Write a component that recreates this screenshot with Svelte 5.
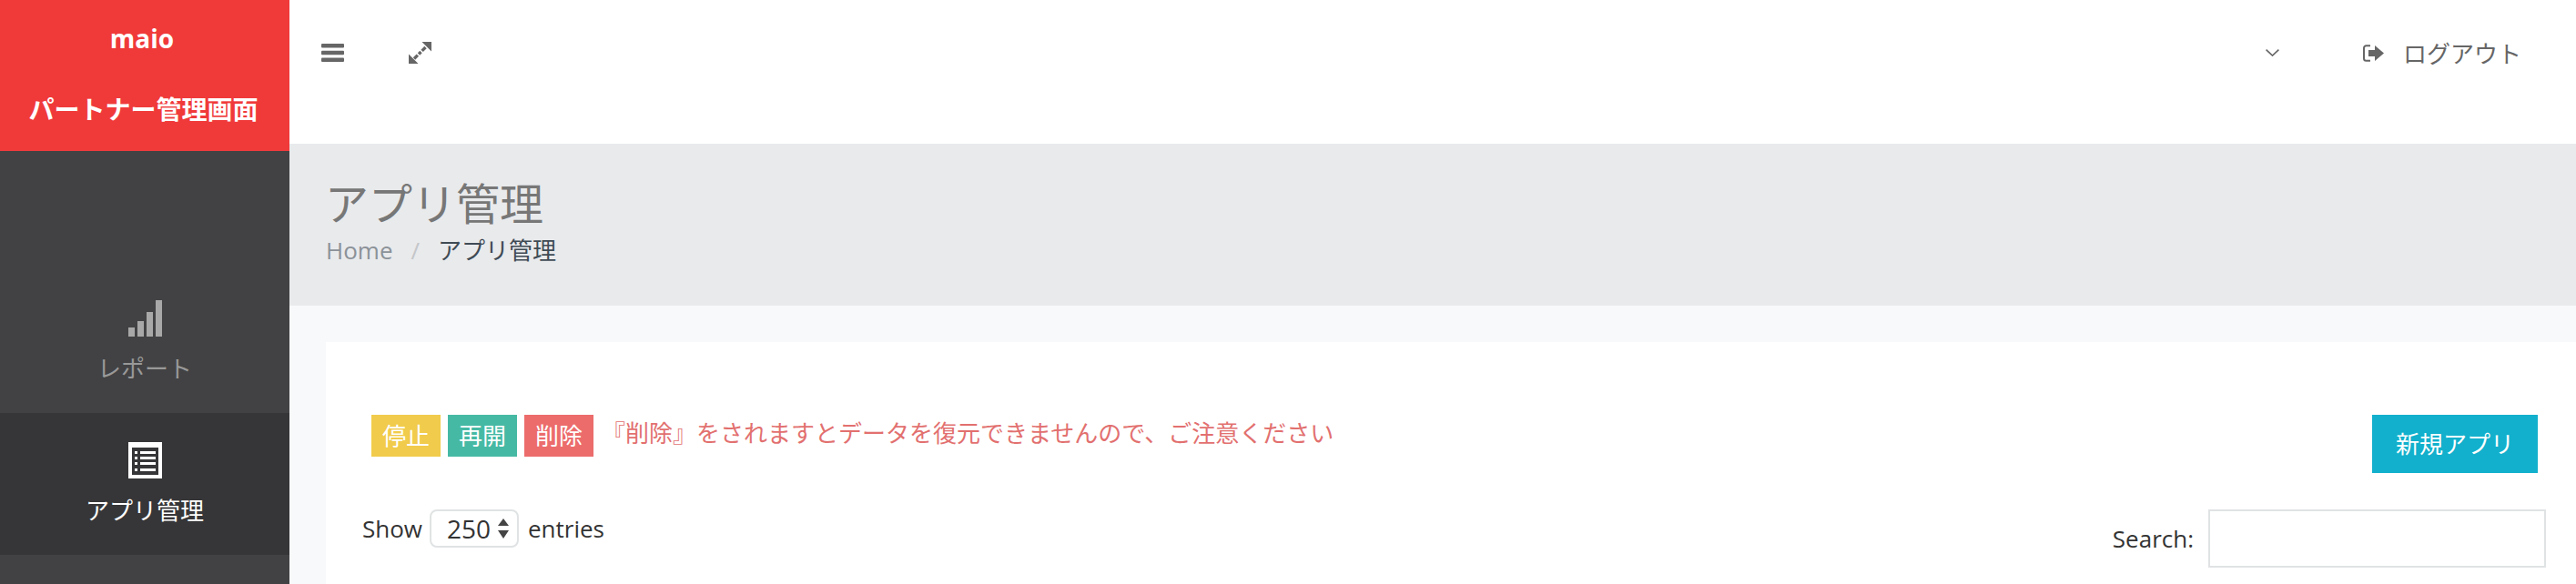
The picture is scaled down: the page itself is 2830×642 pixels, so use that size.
<script>
  const actions = [
    { label: '停止', cls: 'yellow' },
    { label: '再開', cls: 'green' },
    { label: '削除', cls: 'red' }
  ];
</script>

<div class="layout">
  <aside class="sidebar">
    <div class="logo">
      <div class="brand">maio</div>
      <div>パートナー管理画面</div>
    </div>
    <nav class="menu">
      <a class="item" href="#report">
        <svg width="37" height="40" viewBox="0 0 37 40" fill="#a8a8a8">
          <rect x="0" y="30" width="7" height="10" />
          <rect x="10" y="23" width="7" height="17" />
          <rect x="20" y="13" width="7" height="27" />
          <rect x="30" y="0" width="7" height="40" />
        </svg>
        <span>レポート</span>
      </a>
      <a class="item active" href="#apps">
        <svg width="37" height="40" viewBox="0 0 37 40">
          <rect width="37" height="40" fill="#fff" />
          <rect x="4" y="6" width="29" height="30" fill="#363638" />
          <g fill="#fff">
            <rect x="7" y="10" width="3" height="3" />
            <rect x="7" y="16" width="3" height="3" />
            <rect x="7" y="22" width="3" height="3" />
            <rect x="7" y="29" width="3" height="3" />
            <rect x="13" y="10" width="17" height="3" />
            <rect x="13" y="16" width="17" height="3" />
            <rect x="13" y="22" width="17" height="3" />
            <rect x="13" y="29" width="17" height="3" />
          </g>
        </svg>
        <span>アプリ管理</span>
      </a>
    </nav>
  </aside>

  <main class="main">
    <header class="topbar">
      <div class="tools">
        <svg width="25" height="20" viewBox="0 0 25 20" fill="#666">
          <rect width="25" height="4.4" rx="1" />
          <rect y="7.8" width="25" height="4.4" rx="1" />
          <rect y="15.6" width="25" height="4.4" rx="1" />
        </svg>
        <svg width="25" height="24" viewBox="0 0 25 24" fill="#666">
          <path d="M25 0v10.5L14.5 0zM0 24V13.5L10.5 24z" />
          <path d="M18.5 6L6 18.5" fill="none" stroke="#666" stroke-width="3.4" stroke-dasharray="5.5 1.6 3.5 1.6 6" />
        </svg>
      </div>
      <div class="user">
        <svg class="chevron" width="15" height="8" viewBox="0 0 15 8" fill="none" stroke="#666" stroke-width="1.6">
          <path d="M.6.6l6.9 6.5L14.4.6" />
        </svg>
        <a class="logout" href="#logout">
          <svg width="23" height="19" viewBox="0 0 23 19" fill="#666">
            <path d="M8 1.2H3.5A2.5 2.5 0 0 0 1 3.7v11.6a2.5 2.5 0 0 0 2.5 2.5H8" fill="none" stroke="#666" stroke-width="2" />
            <path d="M6 6h7V1l10 8.5L13 18v-5H6z" />
          </svg>
          <span>ログアウト</span>
        </a>
      </div>
    </header>

    <section class="page-head">
      <h1>アプリ管理</h1>
      <div class="crumbs">
        <a href="#home">Home</a>
        <i>/</i>
        <span>アプリ管理</span>
      </div>
    </section>

    <section class="content">
      <div class="card">
        <div class="toolbar">
          <div class="actions">
            {#each actions as a}
              <button class={a.cls}>{a.label}</button>
            {/each}
            <p class="warn">『削除』をされますとデータを復元できませんので、ご注意ください</p>
          </div>
          <button class="new">新規アプリ</button>
        </div>
        <div class="controls">
          <div class="length">
            <span>Show</span>
            <div class="select">
              <span>250</span>
              <svg width="12" height="22" viewBox="0 0 12 22" fill="#444">
                <path d="M6 0l6 8H0zM6 22L0 13h12z" />
              </svg>
            </div>
            <span class="entries">entries</span>
          </div>
          <label class="search">
            <span>Search:</span>
            <input type="search" />
          </label>
        </div>
      </div>
    </section>
  </main>
</div>

<style>
  :global(body) {
    margin: 0;
    overflow: hidden;
    font-family: "Open Sans", "Noto Sans CJK JP", sans-serif;
    font-size: 26px;
    color: #333;
  }

  a {
    color: inherit;
    text-decoration: none;
  }

  .layout {
    display: grid;
    grid-template-columns: 318px 1fr;
    height: 642px;
    overflow: hidden;
  }

  .sidebar {
    background: #424244;
  }

  .logo {
    height: 166px;
    background: #f03a3a;
    color: #fff;
    font-weight: 700;
    font-size: 28px;
    line-height: 80px;
    text-align: center;
    padding-right: 3px;
    box-sizing: border-box;
  }

  .brand {
    padding-top: 2px;
    margin-bottom: -2px;
    padding-right: 3px;
  }

  .menu {
    padding-top: 132px;
  }

  .item {
    height: 156px;
    box-sizing: border-box;
    padding-top: 32px;
    display: flex;
    flex-direction: column;
    align-items: center;
    gap: 17px;
    color: #999;
    line-height: 36px;
  }

  .item.active {
    background: #363638;
    color: #fff;
  }

  .main {
    min-width: 0;
    background: #f8f9fb;
  }

  .topbar {
    height: 158px;
    box-sizing: border-box;
    padding: 0 60px 42px 35px;
    background: #fff;
    display: flex;
    align-items: center;
    justify-content: space-between;
    color: #666;
  }

  .tools {
    display: flex;
    align-items: center;
    gap: 71px;
  }

  .user {
    display: flex;
    align-items: center;
    gap: 92px;
  }

  .logout {
    display: flex;
    align-items: center;
    gap: 21px;
  }

  .page-head {
    height: 178px;
    box-sizing: border-box;
    padding: 37px 0 0 40px;
    background: #e9eaec;
  }

  h1 {
    margin: 0 0 0 -1px;
    font-size: 48px;
    font-weight: 400;
    line-height: 58px;
    color: #777;
  }

  .crumbs {
    margin-top: 4px;
    display: flex;
    gap: 20px;
    line-height: 36px;
    color: #3f4b55;
  }

  .crumbs a {
    color: #8b9298;
  }

  .crumbs i {
    font-style: normal;
    color: #c4c6c9;
  }

  .content {
    padding: 40px 0 0 40px;
  }

  .card {
    background: #fff;
    height: 400px;
    padding: 80px 33px 0 40px;
  }

  .toolbar {
    display: flex;
    justify-content: space-between;
    align-items: flex-start;
    padding: 0 9px 0 10px;
  }

  .actions {
    display: flex;
    align-items: flex-start;
    gap: 8px;
  }

  button {
    border: 0;
    padding: 0 0 3px;
    color: #fff;
    font: inherit;
  }

  .actions button {
    width: 76px;
    height: 46px;
  }

  .yellow {
    background: #f1cb4b;
  }

  .green {
    background: #46b9a4;
  }

  .red {
    background: #ec6c6c;
  }

  .warn {
    margin: 0 0 0 1px;
    line-height: 40px;
    color: #e2706f;
    white-space: nowrap;
  }

  .new {
    width: 182px;
    height: 64px;
    background: #12b0cc;
  }

  .controls {
    margin-top: 40px;
    display: flex;
    justify-content: space-between;
    align-items: flex-start;
  }

  .length {
    display: flex;
    align-items: center;
    gap: 8px;
    height: 42px;
  }

  .entries {
    margin-left: 2px;
  }

  .select {
    width: 98px;
    height: 42px;
    box-sizing: border-box;
    border: 2px solid #e0e3e4;
    border-radius: 8px;
    display: flex;
    align-items: center;
    gap: 8px;
    padding-left: 17px;
    font-size: 28px;
  }

  .search {
    display: flex;
    align-items: center;
    gap: 16px;
  }

  input {
    width: 371px;
    height: 64px;
    box-sizing: border-box;
    border: 2px solid #e0e3e4;
    background: #fff;
    outline: none;
  }
</style>
